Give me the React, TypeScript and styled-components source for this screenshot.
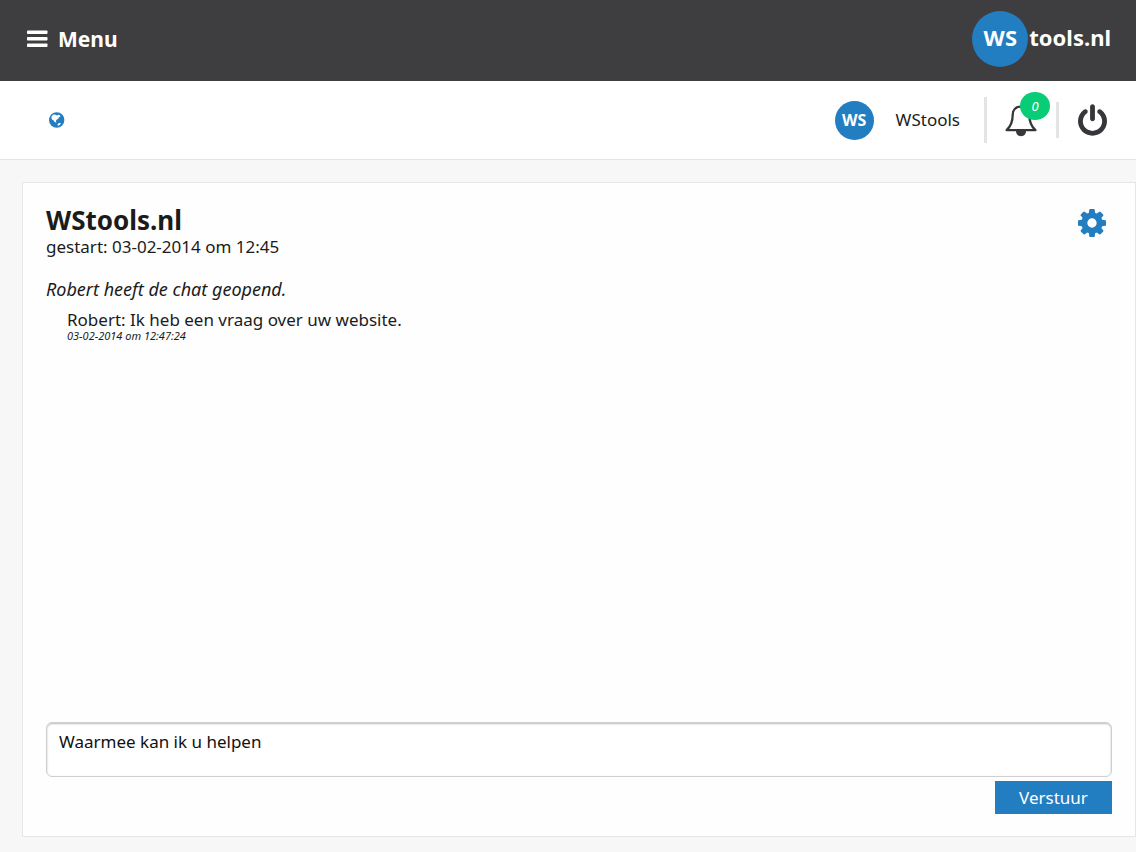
import React from 'react';
import styled, { createGlobalStyle } from 'styled-components';

const GlobalStyle = createGlobalStyle`
  *, *::before, *::after { box-sizing: border-box; }
  body {
    margin: 0;
    background: #f7f7f8;
    color: #1b1b1b;
    font-family: "Noto Sans", "Open Sans", sans-serif;
    font-size: 17px;
    line-height: 24px;
  }
  h1, p { margin: 0; }
  button { font: inherit; border: 0; cursor: pointer; }
  svg { display: block; flex: none; }
`;

const Page = styled.div`
  min-height: 100vh;
  display: flex;
  flex-direction: column;
`;

const TopBar = styled.header`
  display: flex;
  align-items: center;
  justify-content: space-between;
  height: 81px;
  padding: 0 25px 3px 27px;
  background: #3e3d3f;
`;

const MenuButton = styled.button`
  display: flex;
  align-items: center;
  gap: 10px;
  padding: 0;
  background: none;
  color: #fff;
  font-size: 21px;
  font-weight: 700;
`;

const Logo = styled.a`
  display: flex;
  align-items: center;
  gap: 1px;
  color: #fff;
  font-size: 22px;
  font-weight: 700;
  text-decoration: none;
`;

const LogoText = styled.span`
  padding-bottom: 4px;
`;

const Disc = styled.span<{ $size: number; $font: number }>`
  display: flex;
  align-items: center;
  justify-content: center;
  width: ${(p) => p.$size}px;
  height: ${(p) => p.$size}px;
  border-radius: 50%;
  background: #237dc1;
  color: #fff;
  font-size: ${(p) => p.$font}px;
  font-weight: 700;
`;

const UserBar = styled.nav`
  display: flex;
  align-items: center;
  justify-content: space-between;
  height: 79px;
  padding: 0 29px 0 49px;
  background: #fff;
  border-bottom: 1px solid #e4e4e6;
`;

const SiteLink = styled.a`
  display: block;
`;

const UserTools = styled.div`
  display: flex;
  align-items: center;
`;

const UserName = styled.span`
  margin: 0 24px 0 22px;
`;

const Divider = styled.span<{ $height: number }>`
  width: 3px;
  height: ${(p) => p.$height}px;
  background: #e4e4e6;
`;

const IconButton = styled.button`
  position: relative;
  display: flex;
  padding: 0;
  background: none;
  color: #38363a;
`;

const BellButton = styled(IconButton)`
  margin: 0 19px 0 18px;
`;

const PowerButton = styled(IconButton)`
  margin-left: 19px;
`;

const Badge = styled.span`
  position: absolute;
  top: -11px;
  right: -13px;
  width: 30px;
  height: 28px;
  border-radius: 50%;
  background: #08cd76;
  color: #fff;
  font-size: 13px;
  font-style: italic;
  line-height: 28px;
  text-align: center;
`;

const Panel = styled.main`
  flex: 1;
  display: flex;
  flex-direction: column;
  margin: 22px 0 15px 22px;
  padding: 22px 23px;
  background: #fefefe;
  border: 1px solid #e6e6e8;
`;

const PanelHead = styled.div`
  display: flex;
  align-items: flex-start;
  justify-content: space-between;
`;

const SettingsButton = styled(IconButton)`
  margin: 4px 6px 0 0;
  color: #237dc1;
`;

const Title = styled.h1`
  font-size: 26px;
  line-height: 30px;
  font-weight: 700;
`;

const Messages = styled.section`
  flex: 1;
  padding-top: 18px;
`;

const Notice = styled.p`
  font-size: 18px;
  font-style: italic;
`;

const Message = styled.article`
  padding: 9px 0 0 21px;
  line-height: 20px;
`;

const Stamp = styled.time`
  display: block;
  font-size: 11px;
  line-height: 12px;
  font-style: italic;
`;

const ReplyForm = styled.form`
  display: flex;
  flex-direction: column;
  align-items: flex-end;
  gap: 4px;
`;

const Reply = styled.textarea`
  display: block;
  width: 100%;
  height: 55px;
  padding: 7px 12px;
  resize: none;
  border: 1px solid #cfcfd0;
  border-radius: 6px;
  background: #fff;
  box-shadow: inset 0 1px 2px #bcbcbe;
  color: #111;
  font: inherit;
`;

const SendButton = styled.button`
  width: 117px;
  height: 33px;
  padding: 0;
  background: #237dc1;
  color: #fff;
`;

const BarsIcon = () => (
  <svg width="21" height="18" viewBox="0 0 21 18" fill="currentColor" aria-hidden="true">
    <rect y="0.5" width="20.5" height="3.6" rx="0.8" />
    <rect y="7" width="20.5" height="3.6" rx="0.8" />
    <rect y="13.5" width="20.5" height="3.6" rx="0.8" />
  </svg>
);

const GlobeIcon = () => (
  <svg width="16" height="16" viewBox="0 0 16 16" aria-hidden="true">
    <circle cx="7.7" cy="8" r="7.7" fill="#237dc1" />
    <path
      fill="#fff"
      d="M2.6 4.2 4.4 2.6l2.4.1 1 .9 1.4-.9 1.8.5.3 1.3-1.5.9-.8 1.5-1.5.8-.6 1.4.5 1.6-1.7-.8-1-1.5-1.7-1-.6-1.7zM8.6 12.3l1.4-1.2 1.8-.1-.5 1.4-1.4 1-1.2.1z"
    />
  </svg>
);

const BellIcon = () => (
  <svg width="32" height="34" viewBox="0 0 32 34" aria-hidden="true">
    <path
      d="M1.6 27.200C6 23.200 7.700 18.200 7.700 11.800 7.700 6.600 11 3.600 16 3.600s8.300 3 8.300 8.200c0 6.400 1.700 11.400 6.100 15.400z"
      fill="none"
      stroke="currentColor"
      strokeWidth="2.3"
      strokeLinejoin="round"
    />
    <path d="M11 28h10c0 3.200-2 5.200-5 5.200s-5-2-5-5.200z" fill="currentColor" />
  </svg>
);

const PowerIcon = () => (
  <svg width="29" height="32" viewBox="128 0 1536 1664" fill="currentColor" aria-hidden="true">
    <path d="M1664 896q0 156-61 298t-164 245-245 164-298 61-298-61-245-164-164-245-61-298q0-182 80.5-343t226.5-270q43-32 95.5-25t83.5 50q32 42 24.5 94.5t-49.5 84.5q-98 74-151.5 181t-53.5 228q0 104 40.5 198.5t109.5 163.5 163.5 109.5 198.5 40.5 198.5-40.5 163.5-109.5 109.5-163.5 40.5-198.5q0-121-53.5-228t-151.5-181q-42-32-49.5-84.5t24.5-94.5q31-43 84-50t95 25q146 109 226.5 270t80.5 343zm-640-768v640q0 52-38 90t-90 38-90-38-38-90v-640q0-52 38-90t90-38 90 38 38 90z" />
  </svg>
);

const CogIcon = () => (
  <svg width="28" height="28" viewBox="128 128 1536 1536" fill="currentColor" aria-hidden="true">
    <path d="M1152 896q0-106-75-181t-181-75-181 75-75 181 75 181 181 75 181-75 75-181zm512-109v222q0 12-8 23t-20 13l-185 28q-19 54-39 91 35 50 107 138 10 12 10 25t-9 23q-27 37-99 108t-94 71q-12 0-26-9l-138-108q-44 23-91 38-16 136-29 186-7 28-36 28h-222q-14 0-24.5-8.5t-11.5-21.5l-28-184q-49-16-90-37l-141 107q-10 9-25 9-14 0-25-11-126-114-165-168-7-10-7-23 0-12 8-23 15-21 51-66.5t54-70.5q-27-50-41-99l-183-27q-13-2-21-12.5t-8-23.5v-222q0-12 8-23t19-13l186-28q14-46 39-92-40-57-107-138-10-12-10-24 0-10 9-23 26-36 98.5-107.5t94.5-71.5q13 0 26 10l138 107q44-23 91-38 16-136 29-186 7-28 36-28h222q14 0 24.5 8.5t11.5 21.5l28 184q49 16 90 37l142-107q9-9 24-9 13 0 25 10 129 119 165 170 7 8 7 22 0 12-8 23-15 21-51 66.5t-54 70.5q26 50 41 98l183 28q13 2 21 12.5t8 23.5z" />
  </svg>
);

export default function App() {
  return (
    <Page>
      <GlobalStyle />
      <TopBar>
        <MenuButton type="button">
          <BarsIcon />
          Menu
        </MenuButton>
        <Logo href="#">
          <Disc $size={56} $font={22}>
            <LogoText>WS</LogoText>
          </Disc>
          <LogoText>tools.nl</LogoText>
        </Logo>
      </TopBar>
      <UserBar>
        <SiteLink href="#" aria-label="Website">
          <GlobeIcon />
        </SiteLink>
        <UserTools>
          <Disc $size={39} $font={16}>WS</Disc>
          <UserName>WStools</UserName>
          <Divider $height={46} />
          <BellButton type="button" aria-label="Meldingen">
            <BellIcon />
            <Badge>0</Badge>
          </BellButton>
          <Divider $height={36} />
          <PowerButton type="button" aria-label="Uitloggen">
            <PowerIcon />
          </PowerButton>
        </UserTools>
      </UserBar>
      <Panel>
        <PanelHead>
          <div>
            <Title>WStools.nl</Title>
            <p>gestart: 03-02-2014 om 12:45</p>
          </div>
          <SettingsButton type="button" aria-label="Instellingen">
            <CogIcon />
          </SettingsButton>
        </PanelHead>
        <Messages>
          <Notice>Robert heeft de chat geopend.</Notice>
          <Message>
            <p>Robert: Ik heb een vraag over uw website.</p>
            <Stamp dateTime="2014-02-03T12:47:24">03-02-2014 om 12:47:24</Stamp>
          </Message>
        </Messages>
        <ReplyForm onSubmit={(e: React.FormEvent) => e.preventDefault()}>
          <Reply aria-label="Bericht" defaultValue="Waarmee kan ik u helpen" />
          <SendButton type="submit">Verstuur</SendButton>
        </ReplyForm>
      </Panel>
    </Page>
  );
}
